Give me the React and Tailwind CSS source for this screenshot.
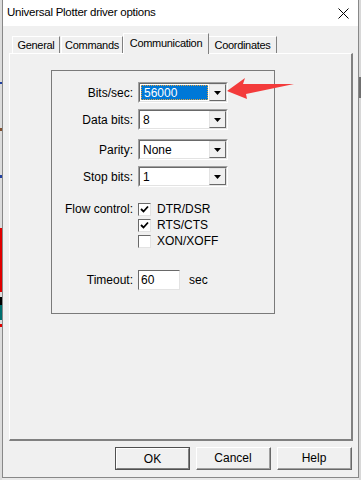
import React from "react";

const FONT = { fontFamily: '"Liberation Sans", Arial, sans-serif' };

function Combo({ value, focused }) {
  return (
    <div className="w-[90px] h-[21px] border border-t-[#a0a0a0] border-l-[#a0a0a0] border-b-white border-r-white bg-white">
      <div className="w-full h-full border border-t-[#696969] border-l-[#696969] border-b-[#e3e3e3] border-r-[#e3e3e3] flex items-stretch">
        <div className="flex-1 flex items-center px-[1px]">
          {focused ? (
            <div className="w-full h-[15px] bg-[#0078d7] border border-dotted border-[#e0a040] flex items-center pl-[2px] text-white">
              {value}
            </div>
          ) : (
            <span className="pl-[2px] text-black">{value}</span>
          )}
        </div>
        <div className="w-[17px] bg-[#f0f0f0] border border-t-[#e3e3e3] border-l-[#e3e3e3] border-b-[#696969] border-r-[#696969] flex items-center justify-center">
          <svg width="7" height="4" viewBox="0 0 7 4">
            <polygon points="0,0 7,0 3.5,4" fill="#000" />
          </svg>
        </div>
      </div>
    </div>
  );
}

function Check({ checked, label }) {
  return (
    <div className="h-[16px] flex items-center">
      <div className="w-[13px] h-[13px] border border-t-[#696969] border-l-[#696969] border-b-[#e3e3e3] border-r-[#e3e3e3] bg-white flex items-center justify-center">
        {checked && (
          <svg width="9" height="9" viewBox="0 0 9 9">
            <path d="M1 4 L3.5 6.5 L8 1.5" stroke="#000" strokeWidth="1.8" fill="none" />
          </svg>
        )}
      </div>
      <span className="ml-[6px]">{label}</span>
    </div>
  );
}

function Row({ label, children, className }) {
  return (
    <div className={"flex items-center " + (className || "")}>
      <div className="w-[81px] text-right">{label}</div>
      <div className="ml-[5px]">{children}</div>
    </div>
  );
}

function Button({ label, isDefault }) {
  return (
    <div
      className={
        "w-[75px] h-[23px] border " +
        (isDefault ? "border-[#505050]" : "border-t-white border-l-white border-b-[#696969] border-r-[#696969]")
      }
    >
      <div
        className={
          "w-full h-full flex items-center justify-center bg-[#f0f0f0] " +
          (isDefault ? "border border-t-white border-l-white border-b-[#808080] border-r-[#808080]" : "border-b border-r border-[#a0a0a0]")
        }
      >
        {label}
      </div>
    </div>
  );
}

export default function App() {
  return (
    <div className="w-[361px] h-[480px] relative overflow-hidden bg-[#e9e9e9] flex text-[12px] text-black" style={FONT}>
      {/* background app, left edge */}
      <div className="w-[2px] flex flex-col bg-[#dcdcdc]">
        <div className="h-[82px]" />
        <div className="h-[2px] bg-[#2040a0]" />
        <div className="h-[44px]" />
        <div className="h-[3px] bg-[#805030]" />
        <div className="h-[44px]" />
        <div className="h-[3px] bg-[#2040a0]" />
        <div className="h-[50px]" />
        <div className="h-[64px] bg-[#e00000]" />
        <div className="h-[5px]" />
        <div className="h-[8px] bg-black" />
        <div className="h-[15px] bg-[#007070]" />
        <div className="h-[4px]" />
        <div className="h-[3px] bg-[#e00000]" />
      </div>

      {/* dialog */}
      <div className="w-[357px] h-[478px] border-l border-r border-b border-[#888888] bg-[#f0f0f0] flex flex-col">
        <div className="h-[26px] bg-white flex items-center pl-[4px] pr-[9px]">
          <span className="flex-1 text-[11.5px] tracking-[-0.25px]">Universal Plotter driver options</span>
          <svg width="11" height="11" viewBox="0 0 11 11">
            <path d="M0.5 0.5 L10.5 10.5 M10.5 0.5 L0.5 10.5" stroke="#000" strokeWidth="1" />
          </svg>
        </div>

        {/* tabs */}
        <div className="mt-[7px] h-[20px] flex items-end pl-[9px] text-[11px] tracking-[-0.3px]">
          <div className="w-[48px] h-[17px] border-t border-l border-white border-r border-r-[#808080] flex items-center justify-center">General</div>
          <div className="ml-[1px] w-[62px] h-[17px] border-t border-l border-white border-r border-r-[#808080] flex items-center justify-center">Commands</div>
          <div className="relative z-10 -mb-[1px] w-[86px] h-[21px] bg-[#f0f0f0] border-t border-l border-white border-r border-r-[#808080] flex items-center justify-center pb-[2px]">Communication</div>
          <div className="w-[68px] h-[17px] border-t border-white border-r border-r-[#808080] flex items-center justify-center">Coordinates</div>
        </div>

        {/* panel */}
        <div className="ml-[6px] w-[344px] h-[388px] border-t border-l border-white border-r-2 border-b-2 border-r-[#808080] border-b-[#808080]">
          <div className="ml-[41px] mt-[16px] w-[224px] h-[244px] border border-[#7a7a7a] flex flex-col">
            <Row label="Bits/sec:" className="mt-[11px]">
              <Combo value="56000" focused />
            </Row>
            <Row label="Data bits:" className="mt-[6px]">
              <Combo value="8" />
            </Row>
            <Row label="Parity:" className="mt-[9px]">
              <Combo value="None" />
            </Row>
            <Row label="Stop bits:" className="mt-[6px]">
              <Combo value="1" />
            </Row>
            <div className="mt-[14px] flex">
              <div className="w-[81px] text-right h-[16px] leading-[16px]">Flow control:</div>
              <div className="ml-[5px] flex flex-col">
                <Check checked label="DTR/DSR" />
                <Check checked label="RTS/CTS" />
                <Check label="XON/XOFF" />
              </div>
            </div>
            <Row label="Timeout:" className="mt-[21px]">
              <div className="flex items-center">
                <div className="w-[42px] h-[20px] border border-t-[#696969] border-l-[#696969] border-b-[#e3e3e3] border-r-[#e3e3e3] bg-white flex items-center pl-[2px]">60</div>
                <span className="ml-[9px]">sec</span>
              </div>
            </Row>
          </div>
        </div>

        {/* buttons */}
        <div className="mt-[6px] flex gap-[6px] pl-[112px]">
          <Button label="OK" isDefault />
          <Button label="Cancel" />
          <Button label="Help" />
        </div>
      </div>

      {/* background app, right edge */}
      <div className="w-[2px] flex flex-col bg-[#d8d8d8]">
        <div className="h-[77px]" />
        <div className="h-[21px] bg-[#707070]" />
      </div>

      {/* red annotation arrow */}
      <svg className="absolute left-0 top-0 pointer-events-none" width="361" height="480">
        <polygon points="227,91 245,78 243,84 294,84 246,94 247,99" fill="#f33b3b" />
      </svg>
    </div>
  );
}
